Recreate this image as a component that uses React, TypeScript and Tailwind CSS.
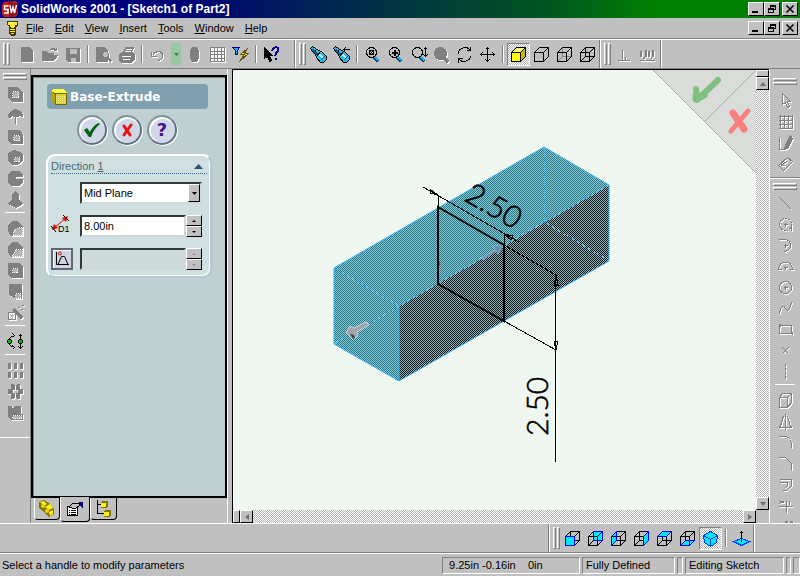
import React from 'react'

const RAISED = 'border border-t-white border-l-white border-r-black border-b-black bg-[#c0c0c0]'
const TRACK = 'bg-[repeating-conic-gradient(#ffffff_0_25%,#b4b4b4_0_50%)] bg-[length:2px_2px]'

interface IconProps {
  children: React.ReactNode
  disabled?: boolean
}

function Icon({ children, disabled }: IconProps) {
  return (
    <svg
      className={`h-[17px] w-[17px] shrink-0 overflow-visible ${
        disabled ? 'text-[#808080] drop-shadow-[1px_1px_0_#ffffff]' : 'text-black'
      }`}
      viewBox="0 0 17 17"
      fill="none"
      stroke="currentColor"
      shapeRendering="crispEdges"
      aria-hidden="true"
    >
      <g transform="translate(.5 .5)">{children}</g>
    </svg>
  )
}

interface ToolProps {
  label: string
  children: React.ReactNode
  enabled?: boolean
  pressed?: boolean
}

function Tool({ label, children, enabled, pressed }: ToolProps) {
  return (
    <button
      type="button"
      title={label}
      aria-label={label}
      disabled={!enabled}
      className={`flex h-[23px] w-[23px] shrink-0 items-center justify-center ${
        pressed ? `border border-t-[#808080] border-l-[#808080] border-r-white border-b-white ${TRACK}` : ''
      }`}
    >
      <Icon disabled={!enabled}>{children}</Icon>
    </button>
  )
}

function SideTool({ label, children, enabled }: ToolProps) {
  return (
    <button
      type="button"
      title={label}
      aria-label={label}
      disabled={!enabled}
      className="flex h-[21px] w-full shrink-0 items-center justify-center"
    >
      <Icon disabled={!enabled}>{children}</Icon>
    </button>
  )
}

function Grip() {
  return (
    <div className="mr-px ml-[3px] flex h-[22px] shrink-0 gap-px">
      <div className="w-[3px] border border-t-white border-l-white border-r-[#808080] border-b-[#808080]" />
      <div className="w-[3px] border border-t-white border-l-white border-r-[#808080] border-b-[#808080]" />
    </div>
  )
}

function SideGrip() {
  return (
    <div className="mx-[3px] flex shrink-0 flex-col gap-px">
      <div className="h-[3px] border border-t-white border-l-white border-r-[#808080] border-b-[#808080]" />
      <div className="h-[3px] border border-t-white border-l-white border-r-[#808080] border-b-[#808080]" />
    </div>
  )
}

const Divider = () => (
  <div className="flex w-2 shrink-0 justify-center">
    <div className="h-[18px] w-[2px] border-r border-l border-r-white border-l-[#808080]" />
  </div>
)

const SideDivider = () => <div className="mx-[5px] mt-[2px] mb-[5px] h-px shrink-0 bg-white" />

function WindowButtons() {
  return (
    <div className="flex pr-[2px]">
      <button type="button" aria-label="Minimize" className={`flex h-[14px] w-4 items-center justify-center ${RAISED}`}>
        <svg width="10" height="8" shapeRendering="crispEdges"><rect x="1" y="6" width="6" height="2" /></svg>
      </button>
      <button type="button" aria-label="Restore" className={`flex h-[14px] w-4 items-center justify-center ${RAISED}`}>
        <svg width="10" height="10" shapeRendering="crispEdges">
          <path d="M3 1h6v5h-2v3h-6v-5h2zM4 3v1h3v1h1v-2zM2 6v2h4v-2z" fillRule="evenodd" />
        </svg>
      </button>
      <button type="button" aria-label="Close" className={`ml-[2px] flex h-[14px] w-4 items-center justify-center ${RAISED}`}>
        <svg width="10" height="8" stroke="#000" strokeWidth="1.500"><path d="M1.500 .5l7 7M8.500 .5l-7 7" /></svg>
      </button>
    </div>
  )
}

function TitleBar() {
  return (
    <header className="flex h-[18px] shrink-0 items-center justify-between bg-[linear-gradient(90deg,#000080_0%,#000078_22%,#002850_42%,#005420_68%,#008000_82%)]">
      <div className="flex items-center gap-[3px] pl-[2px]">
        <svg width="16" height="16" viewBox="0 0 16 16" aria-hidden="true">
          <path d="M0 4l2-3 12-1 2 3v10l-3 3H2l-2-3z" fill="#c02020" />
          <path d="M7 1l9 2v9l-5 4H7z" fill="#901010" />
          <path d="M6.500 5H2.500v3.500h3.500V12H2" fill="none" stroke="#fff" strokeWidth="1.600" />
          <path d="M8 4l1.300 8L11 6l1.500 6L14.500 4" fill="none" stroke="#fff" strokeWidth="1.400" />
        </svg>
        <h1 className="text-[12px] leading-4 font-bold whitespace-nowrap text-white">
          SolidWorks 2001 - [Sketch1 of Part2]
        </h1>
      </div>
      <WindowButtons />
    </header>
  )
}

const MENUS = ['File', 'Edit', 'View', 'Insert', 'Tools', 'Window', 'Help']

function MenuBar() {
  return (
    <div className="flex h-[21px] shrink-0 items-center border-b border-[#808080]">
      <svg className="ml-[6px]" width="13" height="17" viewBox="0 0 13 17" shapeRendering="crispEdges" aria-hidden="true">
        <path d="M1 1h11v4l-2 2v7l-2 2H5l-2-2V7L1 5z" fill="#403800" />
        <path d="M2 2h9v3H9v2H4V5H2zM5 7h3v1H5zM4 9h5v1H4zM4 11h5v1H4zM5 13h3v1H5z" fill="#ffee20" />
        <path d="M3 2h4v1H3z" fill="#fff" />
      </svg>
      <nav className="ml-[7px] flex flex-1 gap-[11px]">
        {MENUS.map((name) => (
          <button key={name} type="button" className="leading-4">
            <span className="underline">{name[0]}</span>
            {name.slice(1)}
          </button>
        ))}
      </nav>
      <WindowButtons />
    </div>
  )
}

// circle and handle of the magnifier that most zoom tools share
const Lens = () => (
  <>
    <path d="M10 11l4 4" stroke="#104060" strokeWidth="4" />
    <path d="M10 10l4 4" stroke="#20b0f0" strokeWidth="2" />
    <circle cx="7" cy="6" r="5" />
  </>
)

const Flashlight = () => (
  <>
    <path d="M0 2l2-2 6 4 3 1 5 5v3l-3 3h-3l-4-5-1-3z" fill="#30b8e8" />
    <path d="M2 3l5 5" stroke="#106088" strokeWidth="2" />
    <path d="M8 7l5 5" stroke="#b0f4ff" strokeWidth="2" />
    <path d="M4 6l2-3M6 10l4-5" />
    <path d="M10 14l4-4" stroke="#0868a0" />
  </>
)

interface CubeProps {
  front?: string
  top?: string
  side?: string
  back?: string
  left?: string
  bottom?: string
  solid?: boolean
  hidden?: string
}

function Cube({ front, top, side, back, left, bottom, solid, hidden = 'currentColor' }: CubeProps) {
  return (
    <>
      {back && <path d="M6 1h9v9H6z" fill={back} />}
      {left && <path d="M1 6l5-5v9l-5 5z" fill={left} />}
      {bottom && <path d="M1 15l5-5h9l-5 5z" fill={bottom} />}
      {!solid && <path d="M6 1v9h9M6 10l-5 5" stroke={hidden} />}
      <path d="M1 6h9v9H1z" fill={front ?? 'none'} />
      <path d="M1 6l5-5h9l-5 5z" fill={top ?? 'none'} />
      <path d="M10 6l5-5v9l-5 5z" fill={side ?? 'none'} />
      {left && <path d="M1 6l5-5v9l-5 5z" stroke="#0000ff" />}
      {bottom && <path d="M1 15l5-5h9l-5 5z" stroke="#0000ff" />}
      {back && <path d="M6 1h9v9H6z" stroke="#0000ff" />}
      {!solid && front && <path d="M1 6h9v9H1z" stroke="#0000ff" />}
      {!solid && top && <path d="M1 6l5-5h9l-5 5z" stroke="#0000ff" />}
      {!solid && side && <path d="M10 6l5-5v9l-5 5z" stroke="#0000ff" />}
    </>
  )
}

function MainToolbar() {
  return (
    <div className="flex h-[30px] shrink-0 border-t border-b border-t-white border-b-[#808080]">
      <div className="flex w-[295px] items-center border-r border-[#808080]">
        <Grip />
        <div className="ml-1 flex items-center">
          <Tool label="New"><path d="M3 1h8l3 3v11H3z" fill="currentColor" /></Tool>
          <Tool label="Open"><path d="M1 14V5h4l1 2h6v2h4l-4 5zM9 3c2-2 4-2 6 1M15 1v3h-3" fill="currentColor" /></Tool>
          <Tool label="Save">
            <path d="M2 2h13v13H4l-2-2z" fill="currentColor" />
            <path d="M5 2h7v5H5zM6 11h5v4H6z" fill="#c0c0c0" stroke="none" />
          </Tool>
          <Divider />
          <Tool label="Print Preview">
            <path d="M1 1h8l3 3v11H1z" fill="currentColor" />
            <circle cx="10" cy="8" r="3" fill="#c0c0c0" />
            <path d="M12 11l4 4" strokeWidth="2" />
          </Tool>
          <Tool label="Print">
            <path d="M1 8l3-2h10l2 2v5l-3 3H3l-2-2zM5 6l2-5h8l-2 5" fill="currentColor" />
            <path d="M7 3h6M6 5h6M3 10h9M4 13h7" stroke="#fff" />
          </Tool>
          <Divider />
          <Tool label="Undo"><path d="M2 5v5h5M3 9c3-5 9-5 10-1 1 3-1 5-4 6" /></Tool>
          <button type="button" aria-label="Undo list" className="mx-[2px] flex h-[22px] w-[10px] items-center justify-center bg-[#98c8a0]">
            <svg width="5" height="3" fill="#408050" aria-hidden="true"><path d="M0 0h5L2.500 3z" /></svg>
          </button>
          <Tool label="Rebuild"><path d="M6 1h4l2 3v8l-2 3H6l-2-3V4z" fill="currentColor" /></Tool>
          <Tool label="Grid">
            <path d="M1 1h14v14H1z" fill="#fff" />
            <path d="M1 5h14M1 8h14M1 12h14M5 1v14M8 1v14M12 1v14" />
          </Tool>
          <Tool label="Filter" enabled>
            <path d="M0 1h7L5 4v4H3V4z" fill="#20b0f0" stroke="#000080" />
            <path d="M15 2l-7 6h4l-5 7 9-8h-4z" fill="#ffee00" stroke="#605000" />
          </Tool>
          <Divider />
          <Tool label="Help" enabled>
            <path d="M1 1v11l3-2 2 5 2-1-2-5h3z" fill="currentColor" />
            <path d="M9 4c0-4 6-4 6-1 0 3-3 2-3 6M12 11v2" stroke="#000080" strokeWidth="2" />
          </Tool>
        </div>
      </div>
      <div className="flex w-[305px] items-center border-r border-l border-l-white border-r-[#808080]">
        <Grip />
        <Tool label="View Orientation" enabled><Flashlight /></Tool>
        <Tool label="Previous View" enabled><Flashlight /><path d="M10 3h6M12 1l-2 2 2 2" /></Tool>
        <Divider />
        <Tool label="Zoom to Fit" enabled><Lens /><path d="M5 4h4v4H5zM5 8l4-4M5 4l4 4" /></Tool>
        <Tool label="Zoom to Area" enabled><Lens /><path d="M4 6h6M7 3v6" strokeWidth="2" /></Tool>
        <Tool label="Zoom In/Out" enabled><Lens /><path d="M15 1v9M13 3l2-2 2 2M13 8l2 2 2-2" /></Tool>
        <Tool label="Zoom to Selection"><circle cx="7" cy="7" r="6" fill="currentColor" /><path d="M10 11l5 5" strokeWidth="3" /></Tool>
        <Tool label="Rotate View" enabled>
          <path d="M2 7c0-6 9-8 12-3M14 0v4h-4M14 9c0 6-9 8-12 3M2 16v-4h4" />
        </Tool>
        <Tool label="Pan" enabled>
          <path d="M8 1v14M1 8h14M6 3l2-2 2 2M6 13l2 2 2-2M3 6L1 8l2 2M13 6l2 2-2 2" />
        </Tool>
        <Divider />
        <Tool label="Shaded" enabled pressed><Cube solid front="#ffff00" top="#ffff80" side="#c8b800" /></Tool>
        <Tool label="Hidden Lines Removed" enabled><Cube solid /></Tool>
        <Tool label="Hidden In Gray" enabled><Cube hidden="#808080" /></Tool>
        <Tool label="Wireframe" enabled><Cube /></Tool>
      </div>
      <div className="flex w-[61px] items-center border-r border-l border-l-white border-r-[#808080]">
        <Grip />
        <Tool label="Add Relation"><path d="M7 3v10M2 14h12M10 10v3" /></Tool>
        <Tool label="Display Relations">
          <path d="M1 14h15" />
          <path d="M2 4v6M4 11h2M7 3v7M10 4v6M12 11h1M14 3v7" strokeWidth="2" />
        </Tool>
      </div>
      <div className="flex-1 border-l border-white" />
    </div>
  )
}

// stippled area on the greyed feature icons
const Dots = ({ d }: { d: string }) => (
  <>
    <path d={d} fill="#b4b4b4" stroke="none" />
    <path d={d} stroke="#ffffff" strokeDasharray="1 1" />
  </>
)

function FeatureBar() {
  return (
    <div className="flex w-[31px] shrink-0 flex-col border-r border-[#808080]">
      <div className="flex flex-col border-b border-white pt-1 pb-[14px]">
        <SideGrip />
        <div className="h-1" />
        <SideTool label="Extrude"><path d="M1 1h9l5 5v9H5l-4-4z" fill="currentColor" /><Dots d="M5 5h6v6H5z" /></SideTool>
        <SideTool label="Revolve"><path d="M1 9c0-4 4-6 7-7 4 1 7 3 7 7l-4-2v2H6V7l-3 3zM8 9v7" fill="currentColor" /></SideTool>
        <SideTool label="Cut Extrude"><path d="M1 2h11l3 4v9H4l-3-3z" fill="currentColor" /><Dots d="M6 7h6v5H6z" /></SideTool>
        <SideTool label="Cut Revolve"><path d="M1 4l5-3 5 1 4 3v6l-5 4H5l-4-4z" fill="currentColor" /><Dots d="M7 8h5v4H7z" /></SideTool>
        <SideTool label="Sweep"><path d="M4 1h8l3 3v2H8v3h7v3l-3 3H4l-3-3V4z" fill="currentColor" /></SideTool>
        <SideTool label="Loft"><path d="M8 0l3 3v5l4 4-4 3-3 1-7-4 4-4V3z" fill="currentColor" /></SideTool>
        <SideDivider />
        <SideTool label="Fillet"><path d="M1 5l4-4h5l5 5v9H4l-3-4z" fill="currentColor" /><Dots d="M6 15c0-5 3-8 9-8v8z" /></SideTool>
        <SideTool label="Chamfer"><path d="M1 5l4-4h5l5 5v9H4l-3-4z" fill="currentColor" /><Dots d="M5 15l4-7h6v7z" /></SideTool>
        <SideTool label="Rib"><path d="M1 1h11l3 3v11H4l-3-3z" fill="currentColor" /><Dots d="M5 6h5v4H5z" /></SideTool>
        <SideTool label="Draft"><path d="M2 1h12v14H8l-6-4z" fill="currentColor" /><Dots d="M8 10h5v5H8z" /></SideTool>
        <SideTool label="Hole Wizard"><path d="M1 8h7v7H1z" /><Dots d="M3 10h3v3H3z" /><path d="M6 5l9 9" strokeWidth="3" /><path d="M10 3h2M14 1h2M13 5h2" /></SideTool>
        <SideDivider />
        <SideTool label="Suppress" enabled>
          <path d="M6 2C0 5 0 11 6 14M5 0l2 2-2 2M5 12l2 2-2 2M13 1v14M11 3l2-2 2 2M11 13l2 2 2-2" />
          <circle cx="2" cy="8" r="2" fill="#00c000" />
          <circle cx="13" cy="8" r="2" fill="#00c000" />
        </SideTool>
        <SideDivider />
        <SideTool label="Linear Pattern">
          <path d="M1 1h2v5H1zM7 1h2v5H7zM13 1h2v5h-2zM1 10h2v5H1zM7 10h2v5H7zM13 10h2v5h-2z" fill="currentColor" />
        </SideTool>
        <SideTool label="Circular Pattern">
          <path d="M4 1h2l1 2v3H5L4 4zM10 1h2v3l-1 2H9V3zM5 10h2v3l-1 2H4v-3zM9 10h2l1 2v3h-2l-1-2zM1 6h3l1 2-1 2H1zM12 6h3v4h-3l-1-2z" fill="currentColor" />
        </SideTool>
        <SideTool label="Mirror"><path d="M1 2h3l1 4 3-4h5v8h2v5H4l-3-3z" fill="currentColor" /><Dots d="M5 11h9v3H5z" /></SideTool>
      </div>
    </div>
  )
}

function SketchBar() {
  return (
    <div className="flex w-[31px] shrink-0 flex-col overflow-hidden border-l border-white pt-[9px]">
      <div className="flex shrink-0 flex-col border-b border-[#808080] pb-[3px]">
        <SideGrip />
        <div className="h-[5px]" />
        <SideTool label="Select"><path d="M5 1v11l3-2 2 5 2-1-2-5h3z" /></SideTool>
        <SideTool label="Grid"><path d="M1 3h14M1 7h14M1 11h14M1 15h14M3 1v14M7 1v14M11 1v14M15 1v14" /></SideTool>
        <SideTool label="Sketch"><path d="M2 2v13h5" /><path d="M13 1l2 3-5 10-3 1 1-4z" fill="currentColor" /></SideTool>
        <SideTool label="Dimension"><path d="M1 10l9-8 5 4-9 9zM4 10l6-5M4 7v3h3" /></SideTool>
      </div>
      <div className="flex flex-col border-t border-white pt-1">
        <SideGrip />
        <div className="h-[3px] shrink-0" />
        <SideTool label="Line"><path d="M2 2l12 12" /></SideTool>
        <SideTool label="Center Point Arc"><circle cx="8" cy="8" r="6" strokeDasharray="2 1" /><path d="M6 8h4M8 6v4M14 8v6" /></SideTool>
        <SideTool label="Tangent Arc"><path d="M1 2h6c8 0 8 11 0 12M6 8h4M8 6v4" /></SideTool>
        <SideTool label="3 Point Arc"><path d="M1 11c0-10 14-10 14 0M0 11h4M12 11h4M6 9h4M8 7v4" /></SideTool>
        <SideTool label="Circle"><circle cx="8" cy="8" r="6" /><path d="M6 8h4M8 6v4" /></SideTool>
        <SideTool label="Spline"><path d="M2 14c1-9 4-10 6-6s5 0 6-6" /></SideTool>
        <SideTool label="Rectangle"><path d="M2 4h12v8H2zM1 3h2v2M13 11h2v2" /></SideTool>
        <SideTool label="Point"><path d="M5 5l6 6M11 5l-6 6" /></SideTool>
        <SideTool label="Centerline"><path d="M8 0v16" strokeDasharray="3 1" /></SideTool>
        <SideDivider />
        <SideTool label="Convert Entities"><path d="M2 5h8v10H2zM2 5l3-4h9l-4 4M14 1v9l-4 5" /></SideTool>
        <SideTool label="Mirror"><path d="M8 0v16M6 3c-2 3-1 7-4 11h12c-3-4-2-8-4-11" /></SideTool>
        <SideTool label="Sketch Fillet"><path d="M1 2h6c5 0 7 3 7 11" /></SideTool>
        <SideTool label="Sketch Chamfer"><path d="M1 2h7l6 6v6" /></SideTool>
        <SideTool label="Offset"><path d="M2 3h12v6l-5 5H5M2 6h8v3l-3 3" /></SideTool>
        <SideTool label="Trim"><path d="M1 9h14M9 3v12M2 3l5 3M2 6l5-3M12 3v4" /></SideTool>
        <SideTool label="Pattern"><path d="M2 5h2v4H2zM8 3h2v4H8zM13 3h2v4h-2z" fill="currentColor" /></SideTool>
      </div>
    </div>
  )
}

function RoundButton({ label, children }: ToolProps) {
  return (
    <button
      type="button"
      aria-label={label}
      className="flex h-[30px] w-[30px] items-center justify-center rounded-full border-2 border-t-[#8094a0] border-r-[#607080] border-b-[#607080] border-l-[#8094a0] bg-[#d0d8e8] shadow-[inset_1px_1px_0_1px_#ffffff,1px_1px_0_#ffffff]"
    >
      {children}
    </button>
  )
}

function Spinner({ off }: { off?: boolean }) {
  const color = off ? '#909090' : '#000000'
  return (
    <div className="flex w-4 shrink-0 flex-col">
      {['M0 2h4L2 0z', 'M0 0h4L2 2z'].map((d, i) => (
        <button
          key={d}
          type="button"
          disabled={off}
          aria-label={i === 0 ? 'Increase' : 'Decrease'}
          className={`flex h-[11px] items-center justify-center ${RAISED}`}
        >
          <svg width="4" height="2" fill={color} aria-hidden="true"><path d={d} /></svg>
        </button>
      ))}
    </div>
  )
}

const FIELD = 'border-2 border-t-[#303838] border-l-[#303838] border-r-[#d0d8d8] border-b-[#d0d8d8] text-[11px]'

function PropertyManager() {
  return (
    <div className="flex w-[197px] shrink-0 flex-col border-r border-white pt-[6px]">
      <div className="flex-1 border-2 border-black bg-[#c0cfcf] px-[13px] pt-[7px] shadow-[inset_1px_1px_0_#808080]">
        <div className="mr-1 ml-px flex h-[25px] items-center rounded bg-[#80a0b0] pl-1">
          <svg width="16" height="16" viewBox="0 0 16 16" shapeRendering="crispEdges" aria-hidden="true">
            <path d="M0 2l3-2h9l4 4v12H4l-4-4z" fill="#706800" />
            <path d="M0 2l3-2h9l4 4H4z" fill="#ffff40" />
            <path d="M0 2l4 3v11l-4-4z" fill="#b0a800" />
            <path d="M5 5h10v10H5z" fill="#d8d040" />
            <path d="M5 7h10M5 9h10M5 11h10M5 13h10" stroke="#f8f090" strokeDasharray="1 1" />
          </svg>
          <h2 className="ml-[3px] font-['DejaVu_Sans'] text-[12px] leading-4 font-bold text-white">Base-Extrude</h2>
        </div>
        <div className="mt-[6px] flex justify-center gap-[5px] pr-1">
          <RoundButton label="OK">
            <svg width="16" height="16" viewBox="0 0 16 16"><path d="M0 8l3-2 3 4c2-4 5-8 9-9l1 1c-4 3-7 7-9 13H5z" fill="#006010" /></svg>
          </RoundButton>
          <RoundButton label="Cancel">
            <svg width="14" height="14" viewBox="0 0 14 14" fill="none" stroke="#e81010" strokeLinecap="round">
              <path d="M4 3l6 9" strokeWidth="3" />
              <path d="M11 2L4 12" strokeWidth="3" />
            </svg>
          </RoundButton>
          <RoundButton label="Help">
            <span className="font-['DejaVu_Sans'] text-[18px] leading-5 font-bold text-[#48108c]">?</span>
          </RoundButton>
        </div>
        <section className="mt-[9px] h-[124px] rounded-[9px] border-2 border-t-white border-r-[#b0c8d8] border-b-[#b0c8d8] border-l-white bg-[#d0dfdf] px-[3px] pt-[3px] shadow-[inset_-1px_-1px_0_#ffffff]">
          <div className="flex h-[15px] items-center justify-between border-b border-dotted border-[#406880] pr-1 text-[11px] text-[#486878]">
            <h3>Direction <span className="underline">1</span></h3>
            <button type="button" aria-label="Collapse Direction 1">
              <svg width="9" height="5" aria-hidden="true"><path d="M0 5L4.500 0 9 5z" fill="#305070" /></svg>
            </button>
          </div>
          <div className="mt-2 ml-[29px] flex">
            <div className="relative w-[122px]">
              <select aria-label="End Condition" className={`h-[22px] w-full appearance-none bg-white px-[2px] ${FIELD}`}>
                <option>Mid Plane</option>
                <option>Blind</option>
              </select>
              <span className={`pointer-events-none absolute top-[2px] right-[2px] flex h-[18px] w-3 items-center justify-center ${RAISED}`}>
                <svg width="5" height="3" aria-hidden="true"><path d="M0 0h5L2.500 3z" /></svg>
              </span>
            </div>
          </div>
          <div className="mt-[11px] flex">
            <label htmlFor="depth" className="relative w-[29px] pt-2 pl-[7px] text-[9px] leading-3">
              <svg className="absolute top-0 left-0" width="20" height="20" viewBox="0 0 20 20" aria-hidden="true">
                <path d="M3 13L15 3" stroke="#e00000" />
                <path d="M1 15l2-6 4 4zM17 1l-6 2 4 4z" fill="#e00000" />
                <path d="M0 11l5 6M12 0l6 6" stroke="#000" />
              </svg>
              D1
            </label>
            <input id="depth" type="text" defaultValue="8.00in" className={`h-[22px] w-[106px] bg-white px-[2px] ${FIELD}`} />
            <Spinner />
          </div>
          <div className="mt-[11px] flex">
            <div className="w-[29px]">
              <button type="button" aria-label="Draft" className="flex h-[22px] w-[22px] items-center justify-center border-2 border-[#606878] bg-[#d0d4e0] shadow-[inset_1px_1px_0_#ffffff]">
                <svg width="16" height="16" viewBox="0 0 16 16" fill="none" className="shrink-0" aria-hidden="true">
                  <path d="M2.500 1v12.500H15" stroke="#000" />
                  <path d="M4 13.500L7.500 5.500h3L14 13.500" stroke="#000" />
                  <circle cx="6" cy="2.500" r="1.500" stroke="#e00000" />
                </svg>
              </button>
            </div>
            <input aria-label="Draft Angle" type="text" disabled className={`h-[22px] w-[106px] bg-[#ccdada] ${FIELD}`} />
            <Spinner off />
          </div>
        </section>
      </div>
      <ManagerTabs />
    </div>
  )
}

function ManagerTabs() {
  return (
    <div className="flex h-[25px] shrink-0 items-start pl-[3px]">
      <button type="button" aria-label="FeatureManager" className="flex h-[22px] w-[26px] items-center justify-center rounded-b-sm border border-t-0 border-l-white border-r-black border-b-black">
        <svg width="18" height="17" viewBox="0 0 18 17" aria-hidden="true">
          <path d="M1 2l5-2 5 3 5 6v5l-5 3-5-5-5-4z" fill="#807800" />
          <path d="M2 2l4-1 3 3-3 2zM7 7l5-3 3 4-4 2zM11 12l4-2v4l-3 2z" fill="#ffee20" />
          <circle cx="5" cy="6" r="2" fill="#e8d800" />
          <circle cx="9" cy="11" r="2" fill="#e8d800" />
        </svg>
      </button>
      <button type="button" aria-label="PropertyManager" className="-mt-px flex h-[25px] w-[30px] items-center justify-center rounded-b-sm border border-t-0 border-l-white border-r-black border-b-black bg-[#c0c0c0]">
        <svg width="18" height="16" viewBox="0 0 18 16" shapeRendering="crispEdges" aria-hidden="true">
          <path d="M1.500 5.500h10v9h-10z" fill="#fff" stroke="#000" />
          <path d="M3 9h1M5 9h5M3 11h1M5 11h5M3 13h1M5 13h5" stroke="#000" />
          <path d="M3 6l4-4h6v3l-3 2H6z" fill="#c0c0c0" stroke="#000" />
          <path d="M13 1h4v6l-4-3z" fill="#000080" />
        </svg>
      </button>
      <button type="button" aria-label="ConfigurationManager" className="flex h-[22px] w-[27px] items-center justify-center rounded-b-sm border border-t-0 border-r-black border-b-black border-l-white">
        <svg width="18" height="18" viewBox="0 0 18 18" shapeRendering="crispEdges" aria-hidden="true">
          <path d="M2.500 0v13.500H9M2.500 4.500H6" fill="none" stroke="#000" />
          <path d="M6 2l2-1h5v5l-2 2H6zM9 11l2-1h5v5l-2 2H9z" fill="#807800" />
          <path d="M6 3h5v4H6zM9 12h5v4H9z" fill="#ffee20" />
        </svg>
      </button>
    </div>
  )
}

const TEAL_FACES = 'M334 268L544 147L609 185L399 306V381L334 344Z'
const DARK_FACE = 'M399 306L609 185V261L399 381Z'
const DIM_TEXT = 'font-[Lato] text-[30px] font-light'

function ModelView() {
  return (
    <svg
      className="block h-full w-full bg-[#f0f7f0]"
      viewBox="233 70 523 440"
      preserveAspectRatio="xMaxYMin meet"
      fill="none"
      role="img"
      aria-label="Extruded block preview"
    >
      <defs>
        <pattern id="teal" width="2" height="2" patternUnits="userSpaceOnUse">
          <path d="M0 0h2v2H0z" fill="#88ccd8" />
          <path d="M0 0h1v1H0zM1 1h1v1H1z" fill="#287484" />
        </pattern>
        <pattern id="dark" width="2" height="2" patternUnits="userSpaceOnUse">
          <path d="M0 0h2v2H0z" fill="#98b4b8" />
          <path d="M0 0h1v1H0zM1 1h1v1H1z" fill="#081418" />
        </pattern>
      </defs>

      <path d="M653 70H756V173Z" fill="#d9dcd9" />
      <path d="M653 70L756 173M705 121L756 70" stroke="#a8aca8" />
      <g strokeLinecap="round" strokeLinejoin="round">
        <path d="M696 89L697 100L718 80" stroke="#80c080" strokeWidth="6" />
        <path d="M696 96V99L704 95" stroke="#80c080" strokeWidth="7" />
        <path d="M733 113L744 129" stroke="#fa8080" strokeWidth="7" />
        <path d="M748 111L731 131" stroke="#fa8080" strokeWidth="5" />
      </g>

      <path d={TEAL_FACES} fill="url(#teal)" />
      <path d={DARK_FACE} fill="url(#dark)" />
      <path d="M334 268L544 147L609 185V261L399 381L334 344ZM399 306V381" stroke="#38b0f0" />
      <g stroke="#50b8e8" shapeRendering="crispEdges">
        <path d="M334 268L399 306L609 185" strokeDasharray="5 2" />
        <path d="M544.500 147V222L609 261M544 222L334 344" strokeDasharray="4 3" />
      </g>

      <path d="M346 333l4-7 4 2 12-6 3 3-12 7 1 4-5 3z" fill="#a0a4ac" stroke="#d0d4d8" />
      <path d="M350 334l4 1 1 3-2 1z" fill="#404448" />
      <path d="M481 258l14-8-2-4 11-1-6 9-2-3-13 9z" fill="#6890b0" stroke="#a0c0d8" strokeDasharray="2 1" />
      <path d="M438 259v6h3z" fill="#d02030" />

      <path d="M438 207L504 245V321L438 284Z" stroke="#000" strokeWidth="2" />
      <g stroke="#000" shapeRendering="crispEdges">
        <path d="M423 187L519 242M438 195V207M504 233V245M504 245L556 275M504 321L556 350M555.500 275V462" />
        <path d="M438 195l-8-6v4zM504 234l7 6 2-4zM556 275l-2 10h4zM556 350l-2-9h4z" />
      </g>
      <g fill="#000" stroke="#000" strokeWidth=".6">
        <text transform="translate(463 200) rotate(30)" className={DIM_TEXT}>2.50</text>
        <text transform="translate(548 436) rotate(-90)" className={DIM_TEXT}>2.50</text>
      </g>
    </svg>
  )
}

function ScrollButton({ label, d }: { label: string; d: string }) {
  return (
    <button type="button" aria-label={label} className={`flex h-[13px] w-[13px] shrink-0 items-center justify-center ${RAISED}`}>
      <svg width="6" height="6" fill="#707070" aria-hidden="true"><path d={d} /></svg>
    </button>
  )
}

function Viewport() {
  return (
    <main className="ml-1 flex min-w-0 flex-1 flex-col border-t border-l border-black">
      <div className="flex min-h-0 flex-1">
        <div className="min-w-0 flex-1"><ModelView /></div>
        <div className={`flex w-[13px] flex-col ${TRACK}`}>
          <div className={`h-[7px] ${RAISED}`} />
          <ScrollButton label="Scroll up" d="M0 5h6L3 1z" />
          <div className="flex-1" />
          <ScrollButton label="Scroll down" d="M0 1h6L3 5z" />
        </div>
      </div>
      <div className="flex h-[13px] shrink-0">
        <div className={`flex flex-1 ${TRACK}`}>
          <div className={`w-[7px] ${RAISED}`} />
          <ScrollButton label="Scroll left" d="M5 0v6L1 3z" />
          <div className="flex-1" />
          <ScrollButton label="Scroll right" d="M1 0v6l4-3z" />
        </div>
        <div className="w-[13px]" />
      </div>
    </main>
  )
}

const CYAN = '#00e8ff'

function ViewsToolbar() {
  return (
    <div className="flex h-[30px] shrink-0 border-t border-b border-t-white border-b-[#808080]">
      <div className="flex-1 border-r border-[#808080]" />
      <div className="flex w-[205px] items-center border-r border-l border-l-white border-r-[#808080]">
        <Grip />
        <Tool label="Front" enabled><Cube front={CYAN} /></Tool>
        <Tool label="Back" enabled><Cube back={CYAN} /></Tool>
        <Tool label="Left" enabled><Cube left={CYAN} /></Tool>
        <Tool label="Right" enabled><Cube side={CYAN} /></Tool>
        <Tool label="Top" enabled><Cube top={CYAN} /></Tool>
        <Tool label="Bottom" enabled><Cube bottom={CYAN} /></Tool>
        <Tool label="Isometric" enabled pressed>
          <path d="M1 5l7-4 7 4-1 7-6 4-6-4z" fill={CYAN} stroke="#0040e0" />
          <path d="M1 5l7 4 7-4M8 9v7" stroke="#0040e0" />
        </Tool>
        <Divider />
        <Tool label="Normal To" enabled>
          <path d="M0 11l8-3 8 3-8 4z" fill={CYAN} stroke="#0040e0" />
          <path d="M8 11V1M6 3l2-2 2 2" />
        </Tool>
      </div>
      <div className="w-[46px] border-l border-white" />
    </div>
  )
}

const PANE = 'h-[17px] border border-t-[#808080] border-l-[#808080] border-r-white border-b-white pl-[3px] leading-[15px] whitespace-pre'

function StatusBar() {
  return (
    <footer className="flex h-[23px] shrink-0 items-center gap-[2px] border-t border-white">
      <div className="flex-1 pl-[2px]">Select a handle to modify parameters</div>
      <div className={`w-[138px] ${PANE}`}>{' 9.25in -0.16in    0in'}</div>
      <div className={`w-[93px] ${PANE}`}>Fully Defined</div>
      <div className={`w-[6px] ${PANE}`} />
      <div className={`w-[99px] ${PANE}`}>Editing Sketch</div>
      <div className={`w-[5px] ${PANE}`} />
      <div className={`w-[7px] ${PANE}`} />
    </footer>
  )
}

export default function App() {
  return (
    <div className="flex h-screen flex-col overflow-hidden bg-[#c0c0c0] font-['Liberation_Sans',sans-serif] text-[11px] text-black">
      <TitleBar />
      <MenuBar />
      <MainToolbar />
      <div className="flex min-h-0 flex-1">
        <FeatureBar />
        <PropertyManager />
        <Viewport />
        <SketchBar />
      </div>
      <ViewsToolbar />
      <StatusBar />
    </div>
  )
}
